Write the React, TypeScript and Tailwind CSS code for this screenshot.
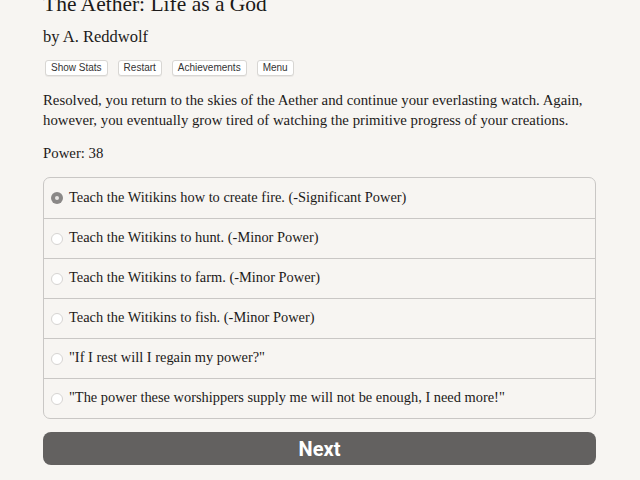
const choices = [
  'Teach the Witikins how to create fire. (-Significant Power)',
  'Teach the Witikins to hunt. (-Minor Power)',
  'Teach the Witikins to farm. (-Minor Power)',
  'Teach the Witikins to fish. (-Minor Power)',
  '"If I rest will I regain my power?"',
  '"The power these worshippers supply me will not be enough, I need more!"',
]

const buttons = ['Show Stats', 'Restart', 'Achievements', 'Menu']

export default function App() {
  return (
    <div className="h-[480px] w-[640px] overflow-hidden bg-[#f7f5f2] text-[#1c1a19] font-['Liberation_Serif',serif]">
      <div className="ml-[43px] w-[553px]">
        <h1 className="-mt-[10px] text-[21.5px] leading-[28px]">The Aether: Life as a God</h1>
        <div className="mt-[8px] text-[16.5px] leading-[22px]">by A. Reddwolf</div>

        <div className="mt-[12px] ml-[2px] flex gap-[10px] font-['Liberation_Sans',sans-serif] text-[10px] text-[#333]">
          {buttons.map((b) => (
            <button
              key={b}
              className="h-[16px] rounded-[3px] border border-[#d8d6d3] bg-white px-[5px] leading-[14px] shadow-[0_1px_0_rgba(0,0,0,0.05)]"
            >
              {b}
            </button>
          ))}
        </div>

        <p className="mt-[14px] text-[14.8px] leading-[20px]">
          Resolved, you return to the skies of the Aether and continue your everlasting watch. Again,
          however, you eventually grow tired of watching the primitive progress of your creations.
        </p>

        <p className="mt-[13px] text-[14.8px] leading-[20px]">Power: 38</p>

        <div className="mt-[14px] overflow-hidden rounded-[7px] border border-[#c9c7c5]">
          {choices.map((c, i) => (
            <div
              key={c}
              className={`flex h-[40px] items-center ${i > 0 ? 'border-t border-[#c9c7c5]' : ''}`}
            >
              <span
                className={`ml-[7px] mr-[6px] flex h-[12px] w-[12px] items-center justify-center rounded-full ${
                  i === 0 ? 'bg-[#8a8887]' : 'border border-[#d6d4d2] bg-white'
                }`}
              >
                {i === 0 && <span className="h-[4px] w-[4px] rounded-full bg-[#e8e6e4]" />}
              </span>
              <span className="pb-[3px] text-[14.4px] leading-[20px]">{c}</span>
            </div>
          ))}
        </div>

        <button className="mt-[13px] flex h-[33px] w-full items-center justify-center rounded-[8px] bg-[#636160] font-['Roboto',sans-serif] text-[20px] font-bold text-white">
          Next
        </button>
      </div>
    </div>
  )
}
